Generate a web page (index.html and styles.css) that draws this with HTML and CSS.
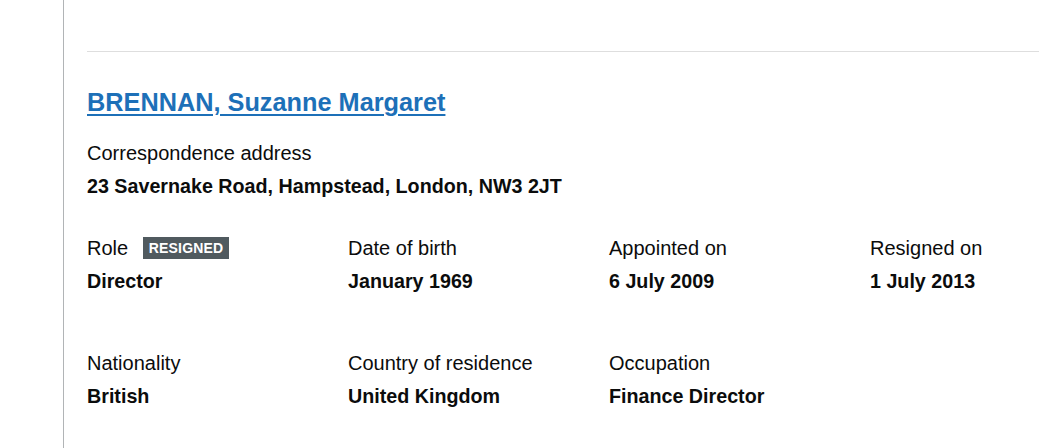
FILE: index.html
```html
<!DOCTYPE html>
<html lang="en">
<head>
<meta charset="utf-8">
<title>Officer</title>
<link rel="stylesheet" href="styles.css">
</head>
<body>
<div class="page">
  <div class="rail"></div>
  <main class="main">
    <div class="officer">
      <h2 class="officer-name"><a href="#">BRENNAN, Suzanne Margaret</a></h2>
      <dl class="address">
        <dt class="label">Correspondence address</dt>
        <dd class="value">23 Savernake Road, Hampstead, London, NW3 2JT</dd>
      </dl>
      <div class="grid row-1">
        <dl class="field">
          <dt class="label">Role <span class="tag">Resigned</span></dt>
          <dd class="value">Director</dd>
        </dl>
        <dl class="field">
          <dt class="label">Date of birth</dt>
          <dd class="value">January 1969</dd>
        </dl>
        <dl class="field">
          <dt class="label">Appointed on</dt>
          <dd class="value">6 July 2009</dd>
        </dl>
        <dl class="field">
          <dt class="label">Resigned on</dt>
          <dd class="value">1 July 2013</dd>
        </dl>
      </div>
      <div class="grid row-2">
        <dl class="field">
          <dt class="label">Nationality</dt>
          <dd class="value">British</dd>
        </dl>
        <dl class="field">
          <dt class="label">Country of residence</dt>
          <dd class="value">United Kingdom</dd>
        </dl>
        <dl class="field">
          <dt class="label">Occupation</dt>
          <dd class="value">Finance Director</dd>
        </dl>
      </div>
    </div>
  </main>
</div>
</body>
</html>
```
FILE: styles.css
```css
html, body {
  margin: 0;
  padding: 0;
  background: #ffffff;
}
body {
  font-family: "Liberation Sans", Arial, sans-serif;
  color: #0b0c0c;
  overflow: hidden;
}
.page {
  display: flex;
  min-height: 448px;
}
.rail {
  width: 63px;
  flex: 0 0 63px;
  border-right: 1px solid #b1b4b6;
}
.main {
  flex: 1 1 auto;
  padding-left: 23px;
  padding-top: 51px;
  min-width: 0;
  overflow: hidden;
}
.officer {
  border-top: 1px solid #dedede;
}
.officer-name {
  margin: 35px 0 0;
  font-size: 25.3px;
  line-height: 30px;
  font-weight: 700;
}
.officer-name a {
  color: #1d70b8;
  text-decoration: underline;
  text-underline-offset: 3px;
  text-decoration-thickness: 2px;
}
dl, dt, dd {
  margin: 0;
}
.address {
  margin-top: 24px;
}
.label {
  font-size: 20px;
  line-height: 25px;
  font-weight: 400;
  margin-bottom: 8px;
}
.value {
  font-size: 19.7px;
  line-height: 25px;
  font-weight: 700;
}
.grid {
  display: grid;
  grid-template-columns: repeat(3, 261px) 1fr;
}
.row-1 {
  margin-top: 37px;
}
.row-2 {
  margin-top: 57px;
}
.tag {
  display: inline-block;
  vertical-align: 2px;
  margin-left: 9px;
  padding: 4px 6px 4px 6px;
  background: #505a5f;
  color: #ffffff;
  font-size: 14px;
  line-height: 14px;
  font-weight: 700;
  text-transform: uppercase;
  letter-spacing: 0.2px;
}
```
